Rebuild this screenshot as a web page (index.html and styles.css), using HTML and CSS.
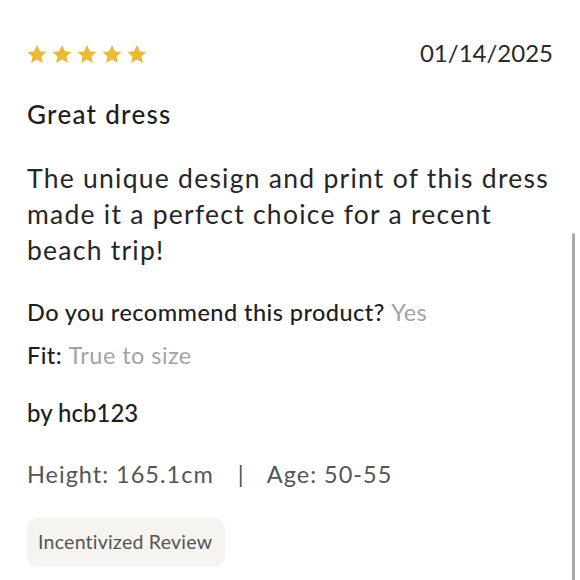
FILE: index.html
```html
<!DOCTYPE html>
<html>
<head>
<meta charset="utf-8">
<link rel="stylesheet" href="styles.css">
</head>
<body>
<div class="review">
  <div class="top-row">
    <div class="stars">
      <svg class="star" viewBox="0 0 20 19"><polygon points="10,0 12.9,6.2 19.5,6.9 14.5,11.4 15.9,18 10,14.6 4.1,18 5.5,11.4 0.5,6.9 7.1,6.2"/></svg>
      <svg class="star" viewBox="0 0 20 19"><polygon points="10,0 12.9,6.2 19.5,6.9 14.5,11.4 15.9,18 10,14.6 4.1,18 5.5,11.4 0.5,6.9 7.1,6.2"/></svg>
      <svg class="star" viewBox="0 0 20 19"><polygon points="10,0 12.9,6.2 19.5,6.9 14.5,11.4 15.9,18 10,14.6 4.1,18 5.5,11.4 0.5,6.9 7.1,6.2"/></svg>
      <svg class="star" viewBox="0 0 20 19"><polygon points="10,0 12.9,6.2 19.5,6.9 14.5,11.4 15.9,18 10,14.6 4.1,18 5.5,11.4 0.5,6.9 7.1,6.2"/></svg>
      <svg class="star" viewBox="0 0 20 19"><polygon points="10,0 12.9,6.2 19.5,6.9 14.5,11.4 15.9,18 10,14.6 4.1,18 5.5,11.4 0.5,6.9 7.1,6.2"/></svg>
    </div>
    <div class="date">01/14/2025</div>
  </div>
  <h2 class="title">Great dress</h2>
  <p class="body">The unique design and print of this dress made it a perfect choice for a recent beach trip!</p>
  <div class="qa">Do you recommend this product? <span class="muted">Yes</span></div>
  <div class="qa fit">Fit: <span class="muted">True to size</span></div>
  <div class="author">by hcb123</div>
  <div class="meta">Height: 165.1cm <span class="sep">|</span> Age: 50-55</div>
  <div class="badge">Incentivized Review</div>
</div>
<div class="scrollbar"></div>
</body>
</html>
```
FILE: styles.css
```css
html, body {
  margin: 0;
  padding: 0;
  background: #ffffff;
}
body {
  font-family: Lato, "Noto Sans", sans-serif;
  color: #222222;
  width: 580px;
  height: 580px;
  overflow: hidden;
}
.review {
  padding: 38px 27px 0 27px;
}
.top-row {
  display: flex;
  justify-content: space-between;
  align-items: center;
  height: 30px;
}
.stars {
  display: flex;
  gap: 5px;
  margin-top: 2px;
}
.star {
  width: 20px;
  height: 19px;
  fill: #eab936;
}
.date {
  font-size: 24px;
  line-height: 30px;
  color: #2a2a2a;
}
.title {
  margin: 30px 0 0 0;
  font-size: 26px;
  line-height: 32px;
  font-weight: 500;
  letter-spacing: 1.3px;
  color: #1e1e1e;
}
.body {
  margin: 30px 0 0 0;
  font-size: 26.5px;
  line-height: 36px;
  letter-spacing: 1.25px;
  color: #262626;
}
.qa {
  margin-top: 28px;
  font-size: 23.5px;
  line-height: 32px;
  font-weight: 500;
  letter-spacing: 0.45px;
  color: #1e1e1e;
}
.qa.fit {
  margin-top: 11px;
}
.muted {
  color: #a3a3a3;
  font-weight: 400;
}
.author {
  margin-top: 26px;
  font-size: 24px;
  line-height: 32px;
  font-weight: 500;
  color: #1e1e1e;
}
.meta {
  margin-top: 29px;
  font-size: 23.5px;
  line-height: 32px;
  letter-spacing: 1px;
  color: #555555;
}
.sep {
  padding: 0 16px 0 17px;
}
.badge {
  display: inline-block;
  margin-top: 28px;
  padding: 12px 13px 13px 11px;
  font-size: 19.5px;
  line-height: 24px;
  letter-spacing: 0.25px;
  color: #555555;
  background: #f5f4f0;
  border-radius: 11px;
}
.scrollbar {
  position: fixed;
  right: 5px;
  top: 233px;
  width: 3px;
  height: 360px;
  background: #a8a8a8;
  border-radius: 2px;
}
```
